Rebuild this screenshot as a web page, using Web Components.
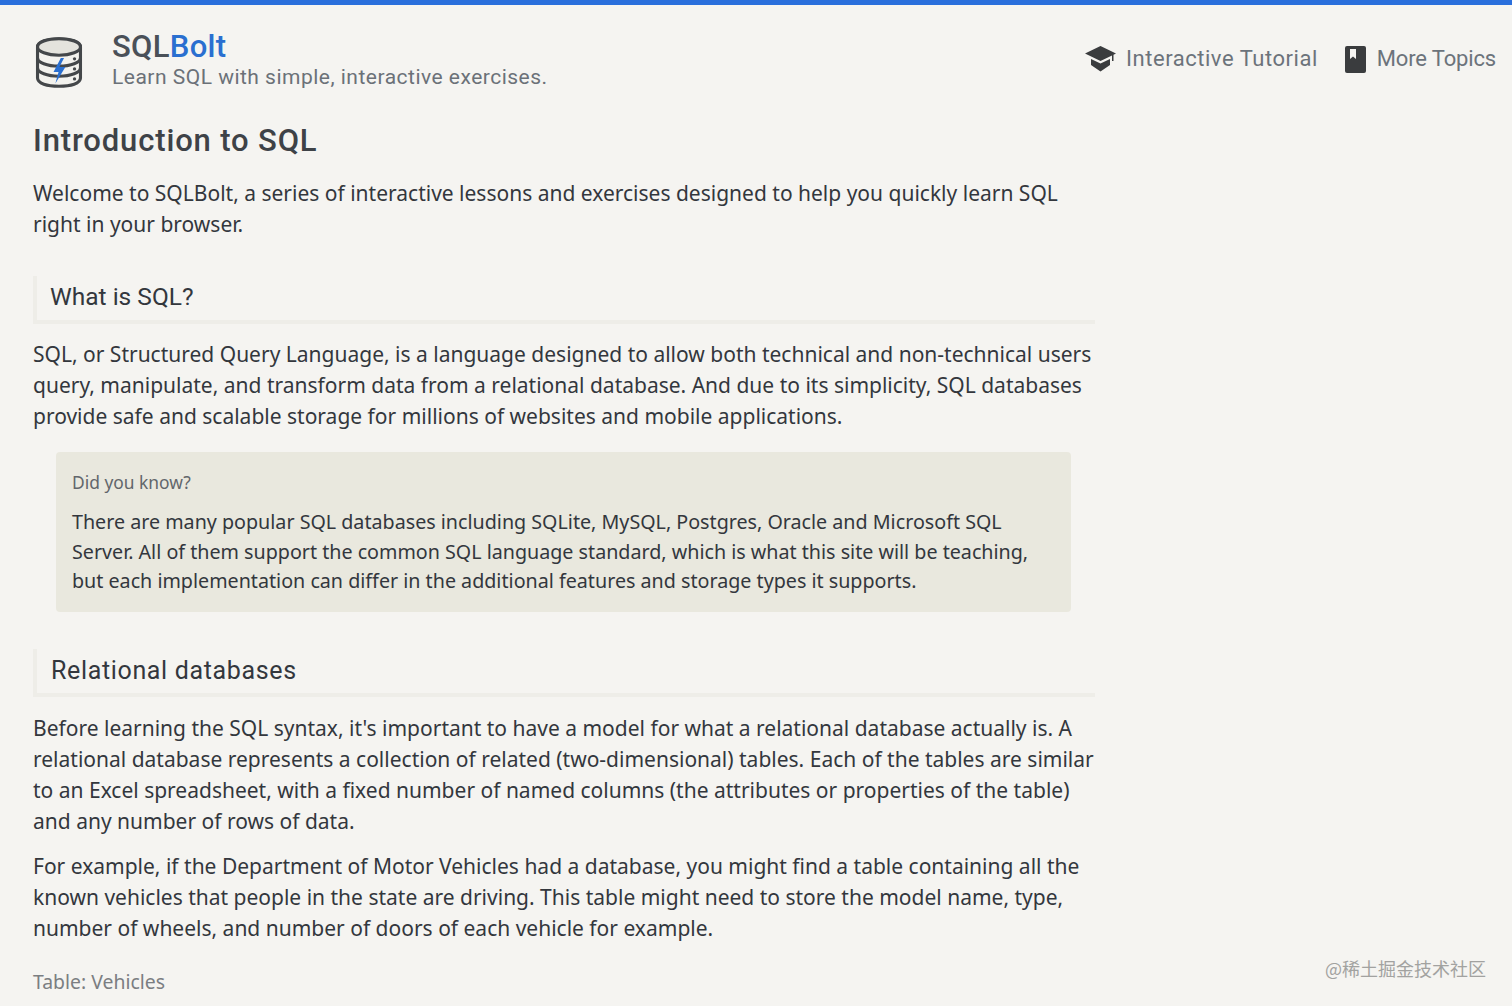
<!DOCTYPE html>
<html><head><meta charset="utf-8">
<style>
html,body{margin:0;padding:0;height:1006px;overflow:hidden;background:#f5f4f1}
body{font-family:"Noto Sans","Open Sans",sans-serif;color:#33373d}
</style></head><body>
<sb-page>
<sb-header></sb-header>
<sb-lesson>
<h1 slot="title">Introduction to SQL</h1>
<sb-p class="lead">Welcome to SQLBolt, a series of interactive lessons and exercises designed to help you quickly learn SQL<br>right in your browser.</sb-p>
<sb-section class="first">What is SQL?</sb-section>
<sb-p>SQL, or Structured Query Language, is a language designed to allow both technical and non-technical users<br>query, manipulate, and transform data from a relational database. And due to its simplicity, SQL databases<br>provide safe and scalable storage for millions of websites and mobile applications.</sb-p>
<sb-callout title-text="Did you know?">There are many popular SQL databases including SQLite, MySQL, Postgres, Oracle and Microsoft SQL<br>Server. All of them support the common SQL language standard, which is what this site will be teaching,<br>but each implementation can differ in the additional features and storage types it supports.</sb-callout>
<sb-section class="second">Relational databases</sb-section>
<sb-p>Before learning the SQL syntax, it's important to have a model for what a relational database actually is. A<br>relational database represents a collection of related (two-dimensional) tables. Each of the tables are similar<br>to an Excel spreadsheet, with a fixed number of named columns (the attributes or properties of the table)<br>and any number of rows of data.</sb-p>
<sb-p class="next">For example, if the Department of Motor Vehicles had a database, you might find a table containing all the<br>known vehicles that people in the state are driving. This table might need to store the model name, type,<br>number of wheels, and number of doors of each vehicle for example.</sb-p>
<sb-caption>Table: Vehicles</sb-caption>
</sb-lesson>
<sb-watermark>@稀土掘金技术社区</sb-watermark>
</sb-page>
<script>
function def(name, css, html){
  customElements.define(name, class extends HTMLElement{
    constructor(){super();const r=this.attachShadow({mode:"open"});r.innerHTML=`<style>${css}</style>${html}`;}
  });
}
def("sb-page",`:host{display:block;border-top:5px solid #2a6fdc;height:1001px;position:relative;overflow:hidden}`,`<slot></slot>`);
def("sb-header",`:host{display:flex;align-items:flex-start;padding:25px 16px 0 35px;height:116px;box-sizing:border-box;font-family:"Roboto","Liberation Sans",sans-serif}
.logo{width:48px;height:53px;flex:none;margin-right:29px;margin-top:6px}
.brand{flex:1}
.name{font-size:31px;line-height:34px;color:#4a5058;letter-spacing:.3px;font-weight:500}
.name b{color:#2a6fd0;font-weight:500}
.sub{font-size:21px;line-height:27px;color:#6b7178;letter-spacing:.49px}
nav{display:flex;gap:27px;margin-top:15px}
a{display:flex;align-items:center;gap:10px;font-size:22px;line-height:28px;color:#6c737b}
.i{letter-spacing:.53px}.m{letter-spacing:-.15px;gap:11px}
`,`<svg class="logo" viewBox="0 0 52 58" fill="none" stroke="#44474a" stroke-width="3.4" stroke-linejoin="round">
<path d="M2.5 12C2.5 6 13 3 26 3s23.500 3 23.500 9v34c0 6-10.500 9-23.500 9S2.500 52 2.500 46Z" fill="#f3f2ee"/>
<ellipse cx="26" cy="12" rx="23.500" ry="9" fill="#e4e3dd"/>
<path d="M2.500 24c0 5 10.500 9 23.500 9s23.500-4 23.500-9M2.500 35c0 5 10.500 9 23.500 9s23.500-4 23.500-9"/>
<circle cx="43" cy="25" r="1.800" fill="#44474a" stroke="none"/><circle cx="43" cy="36" r="1.800" fill="#44474a" stroke="none"/><circle cx="43" cy="47" r="1.800" fill="#44474a" stroke="none"/>
<path d="M28 24l-8 15.500h5.500L22 52l11-18h-6.500l5-10z" fill="#2a6fd0" stroke="none"/>
</svg>
<div class="brand"><div class="name">SQL<b>Bolt</b></div><div class="sub">Learn SQL with simple, interactive exercises.</div></div>
<nav>
<a class="i"><svg width="31" height="26" viewBox="0 0 31 26"><path d="M15.500 0L31 7.500 28.500 8.800V15h-1.500V9.500L15.500 15 0 7.500Z" fill="#3a3c3e"/><path d="M6 13l9.500 4.500L25 13v6l-9.500 6.500L6 19Z" fill="#3a3c3e"/></svg>Interactive Tutorial</a>
<a class="m"><svg width="21" height="27" viewBox="0 0 21 27"><path d="M2 0h17a2 2 0 0 1 2 2v23a2 2 0 0 1-2 2H2a2 2 0 0 1-2-2V2a2 2 0 0 1 2-2Z" fill="#3a3c3e"/><path d="M5 3h6v10l-3-2.500L5 13Z" fill="#f5f4f1"/></svg>More Topics</a>
</nav>`);
def("sb-lesson",`:host{display:block;padding-left:33px;width:1062px;white-space:nowrap}
::slotted(h1){margin:0;font-family:"Roboto","Liberation Sans",sans-serif;font-weight:500;font-size:31px;line-height:40px;color:#3e4247;letter-spacing:.85px}`,`<slot name="title"></slot><slot></slot>`);
def("sb-p",`:host{display:block;font-size:21px;line-height:31px;color:#33373d;margin-top:12px}
:host(.lead){margin-top:17px}
:host(.next){margin-top:14px}`,`<slot></slot>`);
def("sb-section",`:host{display:block;margin-top:36px;height:48px;box-sizing:border-box;border-left:4px solid #eeede8;border-bottom:4px solid #eeede8;padding-left:13px;font-family:"Roboto","Liberation Sans",sans-serif;font-size:25px;line-height:43px;color:#33373d;letter-spacing:.7px;margin-bottom:15px}
:host(.first){font-size:24.500px;letter-spacing:0;line-height:42px}
:host(.second){margin-top:37px;margin-bottom:16px;padding-left:14px;letter-spacing:.65px}`,`<slot></slot>`);
def("sb-callout",`:host{display:block;margin:20px 24px 0 23px;background:#e9e8de;border-radius:4px;padding:15px 16px 15px;height:160px;box-sizing:border-box;font-size:19.700px;line-height:29.700px;color:#33373d}
.t{font-size:17.400px;line-height:30px;color:#62666b;margin-bottom:10px}`,`<div class="t"></div><slot></slot>`);
customElements.whenDefined("sb-callout").then(()=>{document.querySelectorAll("sb-callout").forEach(e=>e.shadowRoot.querySelector(".t").textContent=e.getAttribute("title-text"))});
def("sb-caption",`:host{display:block;margin-top:23px;font-size:19.400px;line-height:30px;color:#7b7e82}`,`<slot></slot>`);
def("sb-watermark",`:host{position:absolute;right:26px;top:951px;font-family:"Noto Sans CJK SC","Noto Sans",sans-serif;font-size:18px;line-height:24px;color:#a2a2a0}`,`<slot></slot>`);
</script>
</body></html>
